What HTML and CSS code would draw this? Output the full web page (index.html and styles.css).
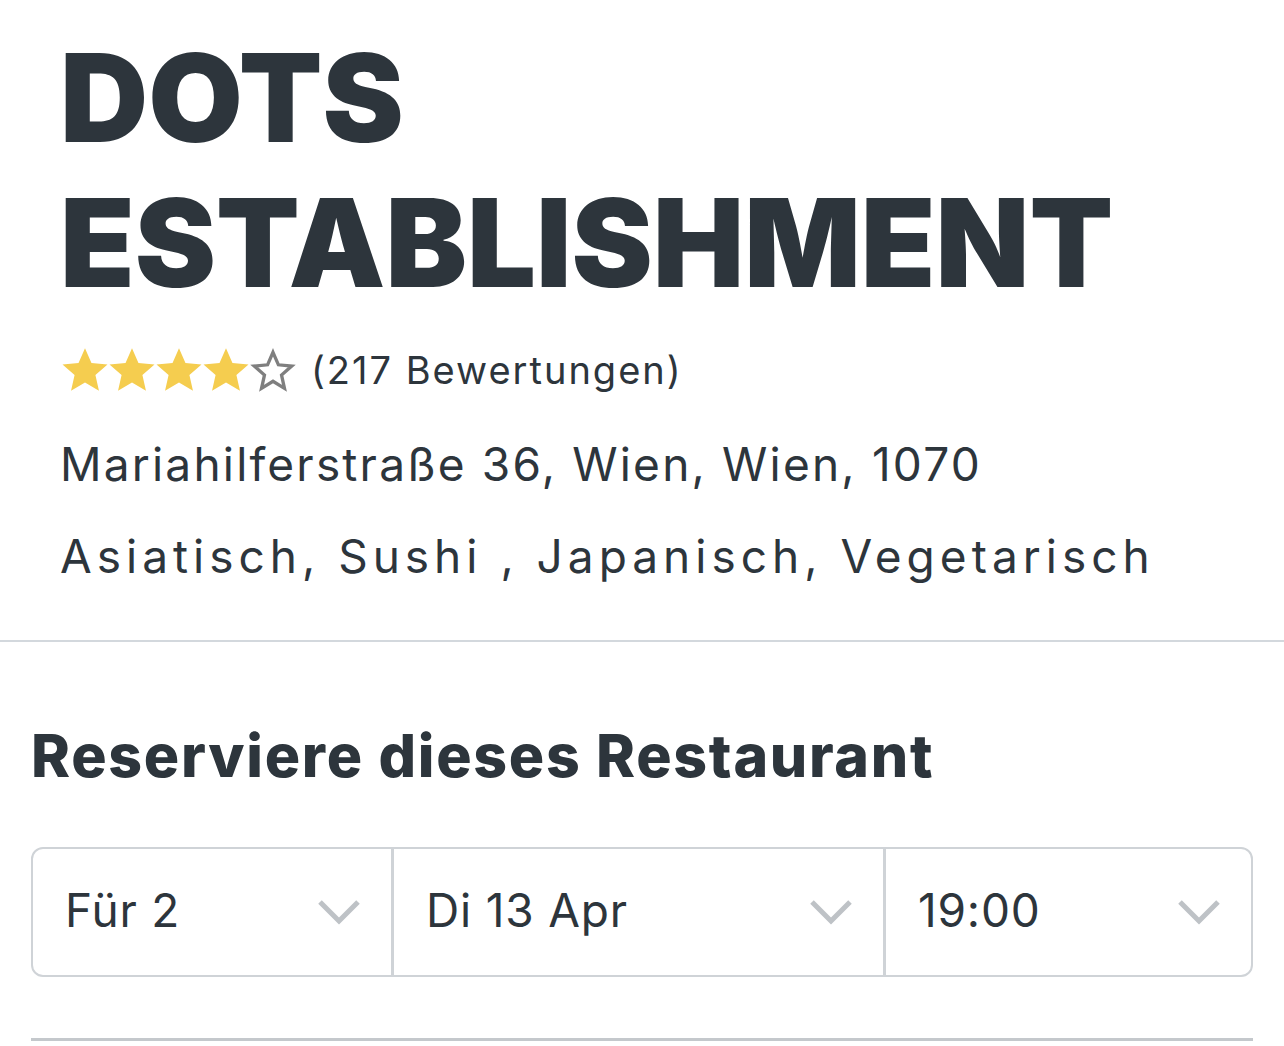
FILE: index.html
```html
<!DOCTYPE html>
<html lang="de">
<head>
    <meta charset="UTF-8">
    <meta name="viewport" content="width=device-width, initial-scale=1.0">
    <title>Dots Establishment</title>
    <link rel="stylesheet" href="styles.css">
</head>
<body>
    <div id="info">
        <h1 class="name">DOTS ESTABLISHMENT</h1>
        <div class="rating">
            <div class="stars">
                <svg viewBox="0 0 24 24"><path class="full" d="M12 1.5l3.1 7.1 7.7.7-5.8 5.1 1.7 7.6L12 18l-6.7 4 1.7-7.6-5.8-5.1 7.7-.7z"/></svg>
                <svg viewBox="0 0 24 24"><path class="full" d="M12 1.5l3.1 7.1 7.7.7-5.8 5.1 1.7 7.6L12 18l-6.7 4 1.7-7.6-5.8-5.1 7.7-.7z"/></svg>
                <svg viewBox="0 0 24 24"><path class="full" d="M12 1.5l3.1 7.1 7.7.7-5.8 5.1 1.7 7.6L12 18l-6.7 4 1.7-7.6-5.8-5.1 7.7-.7z"/></svg>
                <svg viewBox="0 0 24 24"><path class="full" d="M12 1.5l3.1 7.1 7.7.7-5.8 5.1 1.7 7.6L12 18l-6.7 4 1.7-7.6-5.8-5.1 7.7-.7z"/></svg>
                <svg viewBox="0 0 24 24"><path class="empty" d="M12 3.5l2.6 6 6.4.6-4.9 4.3 1.4 6.4L12 17.4l-5.5 3.4 1.4-6.4L3 10.1l6.4-.6z"/></svg>
            </div>
            <span class="count">(217 Bewertungen)</span>
        </div>
        <p class="line address">Mariahilferstraße 36, Wien, Wien, 1070</p>
        <p class="line cuisine">Asiatisch, Sushi , Japanisch, Vegetarisch</p>
    </div>

    <div id="reserve">
        <h2>Reserviere dieses Restaurant</h2>
        <div class="picker">
            <div class="field f-party">
                <span>Für 2</span>
                <svg class="chev" viewBox="0 0 44 26"><path d="M3 3l19 19 19-19"/></svg>
            </div>
            <div class="field f-date">
                <span>Di 13 Apr</span>
                <svg class="chev" viewBox="0 0 44 26"><path d="M3 3l19 19 19-19"/></svg>
            </div>
            <div class="field f-time">
                <span>19:00</span>
                <svg class="chev" viewBox="0 0 44 26"><path d="M3 3l19 19 19-19"/></svg>
            </div>
        </div>
        <div class="bottomline"></div>
    </div>
</body>
</html>
```
FILE: styles.css
```css
*{
    box-sizing: border-box;
    margin: 0px;
    padding: 0px;
}
body{
    background: #fff;
    color: #2d353c;
    font-family: Inter, "Liberation Sans", sans-serif;
    width: 1284px;
    overflow: hidden;
}
#info{
    padding: 25px 0px 38px 60px;
    border-bottom: 2px solid #d3d8dd;
}
.name{
    font-size: 122px;
    font-weight: 900;
    line-height: 145px;
    letter-spacing: 0px;
    width: 1150px;
}
.rating{
    display: flex;
    align-items: center;
    margin-top: 30px;
}
.stars{
    display: flex;
}
.stars svg{
    width: 50px;
    height: 50px;
    margin-right: -3px;
}
.full{
    fill: #f5cd4f;
}
.empty{
    fill: none;
    stroke: #7f7f7f;
    stroke-width: 1.6;
}
.count{
    font-size: 38px;
    letter-spacing: 2px;
    margin-left: 16px;
}
.line{
    font-size: 46px;
    line-height: 92px;
}
.address{
    margin-top: 23px;
    letter-spacing: 2.2px;
}
.cuisine{
    letter-spacing: 5px;
}
#reserve{
    padding: 78px 31px 0px 31px;
}
#reserve h2{
    font-size: 59px;
    font-weight: 800;
    line-height: 72px;
    letter-spacing: 1.7px;
}
.picker{
    display: flex;
    margin-top: 55px;
    height: 130px;
    border: 2px solid #cfd3d7;
    border-radius: 12px;
}
.field{
    display: flex;
    align-items: center;
    justify-content: space-between;
    font-size: 46px;
    letter-spacing: 0.8px;
    padding: 0px 30px 0px 32px;
}
.field + .field{
    border-left: 3px solid #cfd3d7;
}
.f-party{
    width: 358px;
}
.f-date{
    width: 492px;
}
.f-time{
    flex: 1;
}
.field span{
    margin-top: -4px;
}
.chev{
    width: 44px;
    height: 26px;
}
.chev path{
    fill: none;
    stroke: #bec2c6;
    stroke-width: 5;
}
.bottomline{
    margin-top: 61px;
    height: 3px;
    background: #c4c8cc;
}
```
